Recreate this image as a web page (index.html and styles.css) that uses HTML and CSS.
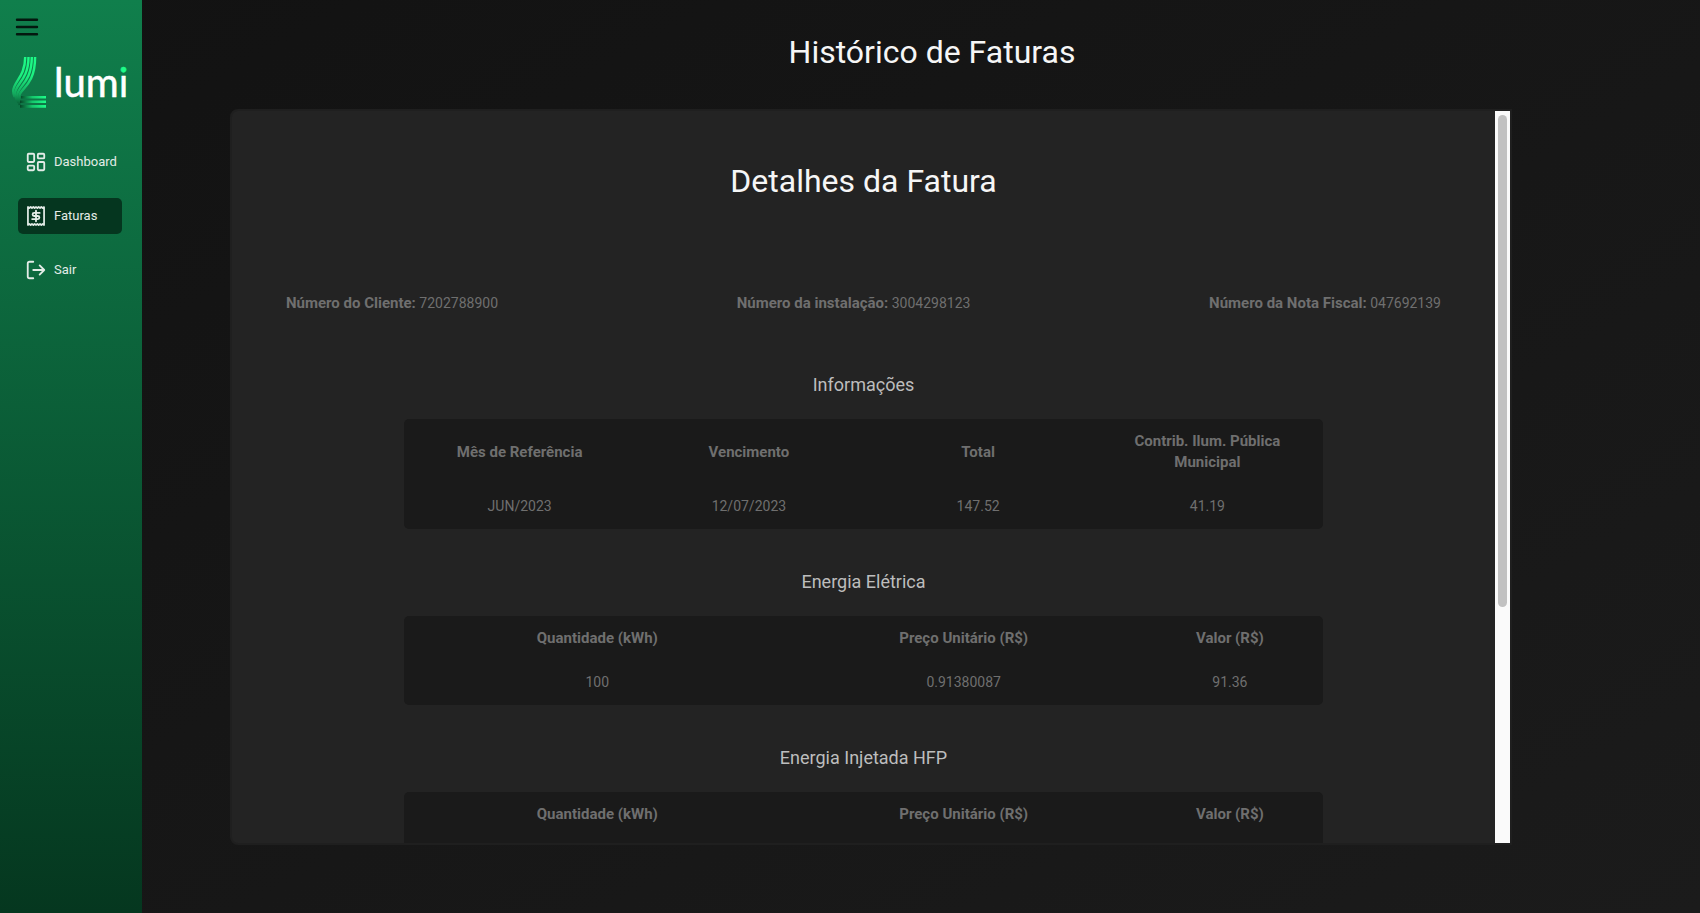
FILE: index.html
```html
<!DOCTYPE html>
<html lang="pt-BR">
<head>
<meta charset="utf-8">
<meta name="viewport" content="width=device-width, initial-scale=1">
<title>Lumi - Faturas</title>
<link rel="stylesheet" href="styles.css">
</head>
<body>
<div class="app">
  <aside class="sidebar">
    <button class="menu-button" type="button" aria-label="Menu">
      <svg width="24" height="18" viewBox="0 0 24 18" aria-hidden="true"><path d="M2 1.8h20M2 9h20M2 16.2h20" stroke="#04180f" stroke-width="2.4" stroke-linecap="round"/></svg>
    </button>
    <a class="logo" href="#" aria-label="Lumi">
      <svg width="118" height="54" viewBox="0 0 118 54">
        <defs>
          <linearGradient id="stem" x1="0" y1="0" x2="0" y2="54" gradientUnits="userSpaceOnUse">
            <stop offset="0" stop-color="#1dfc88"/><stop offset=".4" stop-color="#1dee80"/><stop offset=".72" stop-color="#13a95d"/><stop offset=".95" stop-color="#075330"/>
          </linearGradient>
          <linearGradient id="foot" x1="7" y1="0" x2="34" y2="0" gradientUnits="userSpaceOnUse">
            <stop offset="0" stop-color="#053a21"/><stop offset=".5" stop-color="#15c76c"/><stop offset="1" stop-color="#1dfc88"/>
          </linearGradient>
          <linearGradient id="dot" x1="0" y1="0" x2="0" y2="54" gradientUnits="userSpaceOnUse">
            <stop offset=".37" stop-color="#1dfc88"/><stop offset=".37" stop-color="#fff"/>
          </linearGradient>
        </defs>
        <g fill="none" stroke="url(#stem)" stroke-width="2.4">
          <path d="M13.2 2C13.2 22 1.2 27 1.2 36Q1.2 39 2.5 42"/>
          <path d="M16.5 2C16.5 25 3.4 29 3.2 38Q3.2 42 4.5 45"/>
          <path d="M19.8 2C19.8 28 5.6 31 5.3 40Q5 44 6.2 48"/>
          <path d="M23.1 2C23.1 30 9 33 7.6 40Q6.6 45 7.6 50"/>
        </g>
        <g fill="none" stroke="url(#foot)" stroke-width="2.6">
          <path d="M9 42.2H34M8 46.8H34M8 51.4H34"/>
        </g>
        <text class="wordmark" x="42" y="42">lum<tspan fill="url(#dot)" stroke="url(#dot)">i</tspan></text>
      </svg>
    </a>
    <nav class="nav">
      <a class="nav-link" href="#">
        <svg class="icon" viewBox="0 0 24 24" aria-hidden="true"><rect x="3" y="3" width="7" height="9" rx="1"/><rect x="14" y="3" width="7" height="5" rx="1"/><rect x="14" y="12" width="7" height="9" rx="1"/><rect x="3" y="16" width="7" height="5" rx="1"/></svg>
        Dashboard
      </a>
      <a class="nav-link active" href="#" aria-current="page">
        <svg class="icon" viewBox="0 0 24 24" aria-hidden="true"><path stroke-width="1.9" d="M3.2 2.2V21.8L4.7 20.7L6.2 21.8L7.6 20.7L9.1 21.8L10.5 20.7L12 21.8L13.5 20.7L14.9 21.8L16.4 20.7L17.8 21.8L19.3 20.7L20.8 21.8V2.2L19.3 3.3L17.8 2.2L16.4 3.3L14.9 2.2L13.5 3.3L12 2.2L10.5 3.3L9.1 2.2L7.6 3.3L6.2 2.2L4.7 3.3Z"/><path d="M16 8.6H10a1.7 1.7 0 0 0 0 3.4h4a1.7 1.7 0 0 1 0 3.4H7.8M12 6.2v11.6"/></svg>
        Faturas
      </a>
      <a class="nav-link" href="#">
        <svg class="icon" viewBox="0 0 24 24" aria-hidden="true"><path d="M9 21H5a2 2 0 0 1-2-2V5a2 2 0 0 1 2-2h4M16 17l5-5-5-5M21 12H9"/></svg>
        Sair
      </a>
    </nav>
  </aside>

  <main class="main">
    <h1 class="title page-title">Histórico de Faturas</h1>
    <section class="card" aria-labelledby="details-title">
      <div class="card-body" tabindex="0">
        <h2 class="title" id="details-title">Detalhes da Fatura</h2>
        <div class="client-info">
          <p><strong>Número do Cliente:</strong> 7202788900</p>
          <p><strong>Número da instalação:</strong> 3004298123</p>
          <p><strong>Número da Nota Fiscal:</strong> 047692139</p>
        </div>

        <div class="group">
          <h3 id="t-info">Informações</h3>
          <table aria-labelledby="t-info">
            <thead><tr><th>Mês de Referência</th><th>Vencimento</th><th>Total</th><th>Contrib. Ilum. Pública Municipal</th></tr></thead>
            <tbody><tr><td>JUN/2023</td><td>12/07/2023</td><td>147.52</td><td>41.19</td></tr></tbody>
          </table>
        </div>

        <div class="group">
          <h3 id="t-eletrica">Energia Elétrica</h3>
          <table aria-labelledby="t-eletrica">
            <colgroup><col class="col-qty"><col class="col-price"><col></colgroup>
            <thead><tr><th>Quantidade (kWh)</th><th>Preço Unitário (R$)</th><th>Valor (R$)</th></tr></thead>
            <tbody><tr><td>100</td><td>0.91380087</td><td>91.36</td></tr></tbody>
          </table>
        </div>

        <div class="group">
          <h3 id="t-injetada">Energia Injetada HFP</h3>
          <table aria-labelledby="t-injetada">
            <colgroup><col class="col-qty"><col class="col-price"><col></colgroup>
            <thead><tr><th>Quantidade (kWh)</th><th>Preço Unitário (R$)</th><th>Valor (R$)</th></tr></thead>
            <tbody><tr><td></td><td></td><td></td></tr></tbody>
          </table>
        </div>
      </div>
      <div class="scroll-track" aria-hidden="true"><div class="scroll-thumb"></div></div>
    </section>
  </main>
</div>
</body>
</html>
```

FILE: styles.css
```css
* { box-sizing: border-box; }

body {
  margin: 0;
  font-family: Roboto, "Liberation Sans", sans-serif;
  font-size: 14px;
  line-height: 21px;
  color: #6f6f6f;
  background: #171717;
}

h1, h2, h3, p { margin: 0; font-weight: 400; }

.app {
  display: flex;
  height: 100vh;
  background: linear-gradient(150deg, #121212, #1b1b1b);
}

.sidebar {
  flex: none;
  width: 142px;
  background: linear-gradient(#107f4c, #05371f);
}

.menu-button {
  display: block;
  margin: 18px 0 0 15px;
  padding: 0;
  border: 0;
  background: none;
  cursor: pointer;
}
.menu-button svg, .logo svg { display: block; }

.logo { display: block; margin: 19px 0 0 12px; }

.wordmark {
  font-family: Lato, sans-serif;
  font-size: 40px;
  fill: #fff;
  stroke: #fff;
  stroke-width: .5;
}

.nav {
  display: flex;
  flex-direction: column;
  gap: 18px;
  margin: 35px 20px 0 18px;
}

.nav-link {
  display: flex;
  align-items: center;
  gap: 7px;
  height: 36px;
  padding-left: 7px;
  border-radius: 5px;
  font-size: 13px;
  line-height: 20px;
  color: #e3ece7;
  text-decoration: none;
}
.nav-link.active { background: #05361f; }

.icon {
  width: 22px;
  height: 22px;
  fill: none;
  stroke: currentColor;
  stroke-width: 2;
  stroke-linecap: round;
  stroke-linejoin: round;
}

.main {
  flex: 1;
  min-width: 0;
  display: flex;
  flex-direction: column;
  padding: 28px 188px 68px 88px;
}

.title {
  font-size: 32px;
  line-height: 48px;
  text-align: center;
  color: #f6f6f6;
}
.page-title { margin: 0 -168px 33px -46px; }

.card {
  flex: 1;
  min-height: 0;
  display: flex;
  border: 2px solid #1f1f1f;
  border-radius: 8px 0 0 8px;
  background: #232323;
}
.card-body {
  flex: 1;
  min-width: 0;
  padding: 46px 0 40px;
  overflow-y: auto;
  scrollbar-width: none;
}
.scroll-track {
  flex: none;
  width: 15px;
  padding: 4px 3px;
  background: #fafafa;
}
.scroll-thumb {
  height: 68%;
  border-radius: 5px;
  background: #c1c1c1;
}

.client-info {
  display: flex;
  justify-content: space-between;
  margin: 88px 54px 57px;
}

.group { margin: 0 172px 39px; }
.group h3 {
  margin-bottom: 21px;
  font-size: 18px;
  line-height: 27px;
  text-align: center;
  color: #bdbdbd;
}

table {
  width: 100%;
  table-layout: fixed;
  border-spacing: 2px;
  border-radius: 5px;
  background: #1a1a1a;
}
th, td {
  height: 41px;
  padding: 10px;
  text-align: center;
}
th { padding-bottom: 11px; }
strong, th {
  font-size: 15px;
  font-weight: 700;
}
.col-qty { width: 42%; }
.col-price { width: 38%; }
```
